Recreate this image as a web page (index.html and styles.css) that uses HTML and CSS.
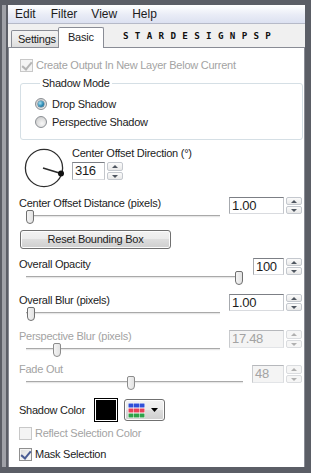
FILE: index.html
```html
<!DOCTYPE html>
<html>
<head>
<meta charset="utf-8">
<link rel="stylesheet" href="styles.css">
</head>
<body>
<div class="outer">
  <div class="chrome">
    <div class="window">
      <div class="menubar">
        <span class="menu">Edit</span>
        <span class="menu">Filter</span>
        <span class="menu">View</span>
        <span class="menu">Help</span>
      </div>
      <div class="tabstrip">
        <div class="tab">Settings</div>
        <div class="tab active">Basic</div>
        <div class="logo">STARDESIGNPSP</div>
      </div>
      <div class="panel">
        <div class="check disabled top-check"><span class="box checked"></span><span>Create Output In New Layer Below Current</span></div>

        <fieldset class="group">
          <legend>Shadow Mode</legend>
          <div class="radio first"><span class="dot on"></span><span>Drop Shadow</span></div>
          <div class="radio second"><span class="dot"></span><span>Perspective Shadow</span></div>
        </fieldset>

        <div class="dir-row">
          <svg class="dial" width="40" height="40" viewBox="0 0 40 40">
            <circle cx="20" cy="20" r="18.6" fill="none" stroke="#2e2e2e" stroke-width="1.3"/>
            <line x1="19" y1="20" x2="37" y2="25.5" stroke="#2a2a2a" stroke-width="1.6"/>
            <circle cx="37" cy="25.5" r="3" fill="#111"/>
          </svg>
          <div class="dir-col">
            <div class="label">Center Offset Direction (°)</div>
            <div class="spin dir-spin">
              <div class="input w33">316</div>
              <div class="arrows"><span class="up"></span><span class="down"></span></div>
            </div>
          </div>
        </div>

        <div class="param p-dist">
          <div class="left">
            <div class="label">Center Offset Distance (pixels)</div>
            <div class="slider s194"><div class="track"></div><div class="thumb" style="left:0px"></div></div>
          </div>
          <div class="spin">
            <div class="input w55">1.00</div>
            <div class="arrows"><span class="up"></span><span class="down"></span></div>
          </div>
        </div>

        <div class="button reset">Reset Bounding Box</div>

        <div class="param p-opac">
          <div class="left">
            <div class="label">Overall Opacity</div>
            <div class="slider s214"><div class="track"></div><div class="thumb" style="left:209px"></div></div>
          </div>
          <div class="spin">
            <div class="input w31">100</div>
            <div class="arrows"><span class="up"></span><span class="down"></span></div>
          </div>
        </div>

        <div class="param p-blur">
          <div class="left">
            <div class="label">Overall Blur (pixels)</div>
            <div class="slider s194"><div class="track"></div><div class="thumb" style="left:1px"></div></div>
          </div>
          <div class="spin">
            <div class="input w55">1.00</div>
            <div class="arrows"><span class="up"></span><span class="down"></span></div>
          </div>
        </div>

        <div class="param p-persp disabled">
          <div class="left">
            <div class="label">Perspective Blur (pixels)</div>
            <div class="slider s194"><div class="track"></div><div class="thumb" style="left:27px"></div></div>
          </div>
          <div class="spin">
            <div class="input w55">17.48</div>
            <div class="arrows"><span class="up"></span><span class="down"></span></div>
          </div>
        </div>

        <div class="param p-fade disabled">
          <div class="left">
            <div class="label">Fade Out</div>
            <div class="slider s217"><div class="track"></div><div class="thumb" style="left:101px"></div></div>
          </div>
          <div class="spin">
            <div class="input w32">48</div>
            <div class="arrows"><span class="up"></span><span class="down"></span></div>
          </div>
        </div>

        <div class="color-row">
          <span class="label">Shadow Color</span>
          <span class="swatch"><span class="swatch-fill"></span></span>
          <span class="button picker">
            <svg width="17" height="15" viewBox="0 0 17 15">
              <rect x="0" y="0" width="17" height="15" fill="#fff"/>
              <rect x="0.5" y="0.5" width="5" height="4" fill="#2f4fd8"/>
              <rect x="6" y="0.5" width="5" height="4" fill="#2f4fd8"/>
              <rect x="11.5" y="0.5" width="5" height="4" fill="#2f4fd8"/>
              <rect x="0.5" y="5.5" width="5" height="4" fill="#e8405a"/>
              <rect x="6" y="5.5" width="5" height="4" fill="#e8405a"/>
              <rect x="11.5" y="5.5" width="5" height="4" fill="#e8405a"/>
              <rect x="0.5" y="10.5" width="5" height="4" fill="#2ea24a"/>
              <rect x="6" y="10.5" width="5" height="4" fill="#2ea24a"/>
              <rect x="11.5" y="10.5" width="5" height="4" fill="#2ea24a"/>
            </svg>
            <svg class="caret" width="7" height="4" viewBox="0 0 7 4"><path d="M0 0H7L3.5 4Z" fill="#000"/></svg>
          </span>
        </div>

        <div class="check disabled reflect"><span class="box"></span><span>Reflect Selection Color</span></div>
        <div class="check mask"><span class="box checked"></span><span>Mask Selection</span></div>
      </div>
    </div>
  </div>
</div>
</body>
</html>
```
FILE: styles.css
```css
* { box-sizing: border-box; }
html, body { margin: 0; padding: 0; }
body {
  width: 311px;
  height: 473px;
  overflow: hidden;
  background: #5b5e66;
  font-family: "Liberation Sans", Arial, sans-serif;
  font-size: 11px;
  letter-spacing: -0.25px;
  color: #1c1c1c;
}
.outer {
  height: 473px;
  padding: 5px 6px 6px 2px;
}
.chrome {
  height: 100%;
  border-left: 4px solid #9fa1a7;
  padding-left: 2px;
  background: #5b5e66;
}
.window {
  height: 100%;
  background: #f0f0f0;
  display: flex;
  flex-direction: column;
}
.menubar {
  height: 19px;
  flex: none;
  background: linear-gradient(#ffffff, #e9ecf6 55%, #dce1f1);
  border-bottom: 1px solid #b6bac8;
  display: flex;
  align-items: center;
  padding-left: 7px;
  font-size: 12px;
  letter-spacing: 0;
}
.menu { margin-right: 15px; }
.menu:nth-child(2) { margin-right: 14px; }
.menu:nth-child(3) { margin-right: 15px; }
.tabstrip {
  height: 23px;
  flex: none;
  display: flex;
  align-items: flex-end;
  padding-left: 3px;
}
.tab {
  height: 17px;
  width: 48px;
  border: 1px solid #898c95;
  border-bottom: none;
  border-radius: 2px 2px 0 0;
  background: linear-gradient(#f3f3f3, #ebebeb 50%, #dcdcdc);
  padding-left: 6px;
  line-height: 16px;
  font-size: 11px;
}
.tab.active {
  height: 21px;
  width: 46px;
  margin-left: -1px;
  margin-bottom: -1px;
  background: #fff;
  position: relative;
  z-index: 1;
  padding-left: 9px;
  line-height: 18px;
}
.logo {
  align-self: center;
  margin-left: 19px;
  margin-top: 2px;
  font-family: "DejaVu Sans Mono", monospace;
  font-weight: bold;
  font-size: 8px;
  letter-spacing: 5.5px;
  color: #111;
  transform: scaleX(1.15);
  transform-origin: left center;
}
.panel {
  flex: 1;
  background: #fff;
  border: 1px solid #898c95;
  border-bottom: none;
  padding: 10px 2px 0 10px;
  display: flex;
  flex-direction: column;
}
.label { line-height: 14px; height: 14px; white-space: nowrap; }
.disabled, .disabled .label { color: #a3a3a3; }

/* checkboxes */
.check {
  display: flex;
  align-items: center;
  height: 14px;
  line-height: 14px;
}
.box {
  width: 13px;
  height: 13px;
  border: 1px solid #8f8f8f;
  background: linear-gradient(135deg, #dcdcdc, #fbfbfb);
  box-shadow: inset 0 0 0 1px #f4f4f4;
  margin-right: 3px;
  position: relative;
  flex: none;
}
.box.checked::after {
  content: "";
  position: absolute;
  left: 3px;
  top: 0px;
  width: 4px;
  height: 8px;
  border-right: 2px solid #4a5c94;
  border-bottom: 2px solid #4a5c94;
  transform: rotate(40deg);
}
.disabled .box {
  border-color: #c8c8c8;
  background: #f4f4f4;
}
.disabled .box.checked::after { border-color: #b4b4b4; }
.top-check { margin-left: 1px; }

/* group */
.group {
  margin: 4px 0 0 1px;
  width: 283px;
  border: 1px solid #d5dfe5;
  border-radius: 3px;
  padding: 7px 0 10px 14px;
  min-width: 0;
}
.group legend {
  padding: 0 2px;
  margin-left: 5px;
  line-height: 14px;
}
.radio {
  display: flex;
  align-items: center;
  height: 14px;
}
.radio.second { margin-top: 4px; }
.dot {
  width: 12px;
  height: 12px;
  border-radius: 50%;
  border: 1px solid #8b8f94;
  background: radial-gradient(circle at 60% 65%, #f8f8f8, #d4d4d4 70%, #c4c4c4);
  margin-right: 5px;
  position: relative;
  flex: none;
}
.dot.on::after {
  content: "";
  position: absolute;
  left: 2px;
  top: 2px;
  width: 6px;
  height: 6px;
  border-radius: 50%;
  background: radial-gradient(circle at 35% 35%, #a8e2f4, #2b8bb5 55%, #1a4f76);
  box-shadow: 0 0 0 0.5px #3c6e8a;
}

/* direction */
.dir-row {
  display: flex;
  margin-top: 6px;
}
.dial { margin: 2px 0 0 5px; flex: none; }
.dir-col { margin-left: 8px; }
.dir-spin { margin-top: 2px; }

/* spin box */
.spin {
  display: flex;
  height: 17px;
  flex: none;
}
.dir-spin { height: 18px; }
.input {
  height: 100%;
  border: 1px solid;
  border-color: #7c7f85 #c3c6cb #d9dbdf #a6a9ae;
  background: #fff;
  font-size: 13px;
  letter-spacing: -0.3px;
  line-height: 15px;
  padding-left: 2px;
}
.w33 { width: 33px; }
.w55 { width: 55px; }
.w31 { width: 31px; }
.w32 { width: 32px; }
.arrows {
  width: 16px;
  margin-left: 2px;
  display: flex;
  flex-direction: column;
  gap: 1px;
}
.arrows span {
  flex: 1;
  border: 1px solid #c4c8ce;
  border-radius: 2px;
  background: linear-gradient(#fbfbfb, #e9e9e9);
  position: relative;
}
.arrows span::after {
  content: "";
  position: absolute;
  left: 4px;
  top: 2px;
  border-left: 3px solid transparent;
  border-right: 3px solid transparent;
}
.arrows .up::after { border-bottom: 3px solid #4f5660; }
.arrows .down::after { border-top: 3px solid #4f5660; }
.disabled .input {
  background: #f4f4f4;
  border-color: #b6b8bc #dadcdf #e2e4e7 #c9cbce;
  color: #a3a3a3;
}
.disabled .arrows span { border-color: #dadcdf; background: #f6f6f6; }
.disabled .arrows .up::after { border-bottom-color: #b0b0b0; }
.disabled .arrows .down::after { border-top-color: #b0b0b0; }

/* params */
.param {
  display: flex;
  justify-content: space-between;
  height: 28px;
}
.param .left { flex: 1; }
.param .spin { margin-top: 1px; }
.param .label { height: 13px; line-height: 14px; }
.slider {
  height: 14px;
  margin-left: 7px;
  position: relative;
}
.s194 { width: 194px; }
.s214 { width: 214px; }
.s217 { width: 217px; }
.track {
  position: absolute;
  left: 0;
  right: 0;
  top: 6px;
  height: 3px;
  border-top: 1px solid #a9a9a9;
  background: #e7e7e7;
  border-bottom: 1px solid #fafafa;
}
.thumb {
  position: absolute;
  top: 1px;
  width: 8px;
  height: 14px;
  border: 1px solid #707070;
  border-radius: 2px 2px 4px 4px;
  background: linear-gradient(90deg, #f4f4f4, #e2e2e2);
}
.disabled .thumb { border-color: #8c8c8c; }
.p-dist { margin-top: 8px; }
.p-opac { margin-top: 8px; }
.p-blur { margin-top: 8px; }
.p-persp { margin-top: 8px; }
.p-fade { margin-top: 5px; }
.p-fade .spin { margin-top: 3px; height: 18px; }
.p-persp .spin { height: 18px; }

/* buttons */
.button {
  border: 1px solid #707070;
  border-radius: 3px;
  background: linear-gradient(#f2f2f2, #ebebeb 49%, #dddddd 50%, #cfcfcf);
  box-shadow: inset 0 0 0 1px #fcfcfc;
}
.reset {
  margin: 6px 0 0 1px;
  width: 151px;
  height: 19px;
  text-align: center;
  line-height: 17px;
}

.color-row {
  display: flex;
  align-items: center;
  margin-top: 8px;
  height: 24px;
}
.swatch {
  margin-left: 9px;
  width: 24px;
  height: 24px;
  border: 1px solid #000;
  padding: 1px;
  background: #fff;
}
.swatch-fill { display: block; width: 100%; height: 100%; background: #000; }
.picker {
  margin-left: 6px;
  width: 41px;
  height: 22px;
  display: flex;
  align-items: center;
  padding-left: 3px;
}
.caret { margin-left: 6px; }
.reflect { margin-top: 4px; }
.mask { margin-top: 7px; }
```
